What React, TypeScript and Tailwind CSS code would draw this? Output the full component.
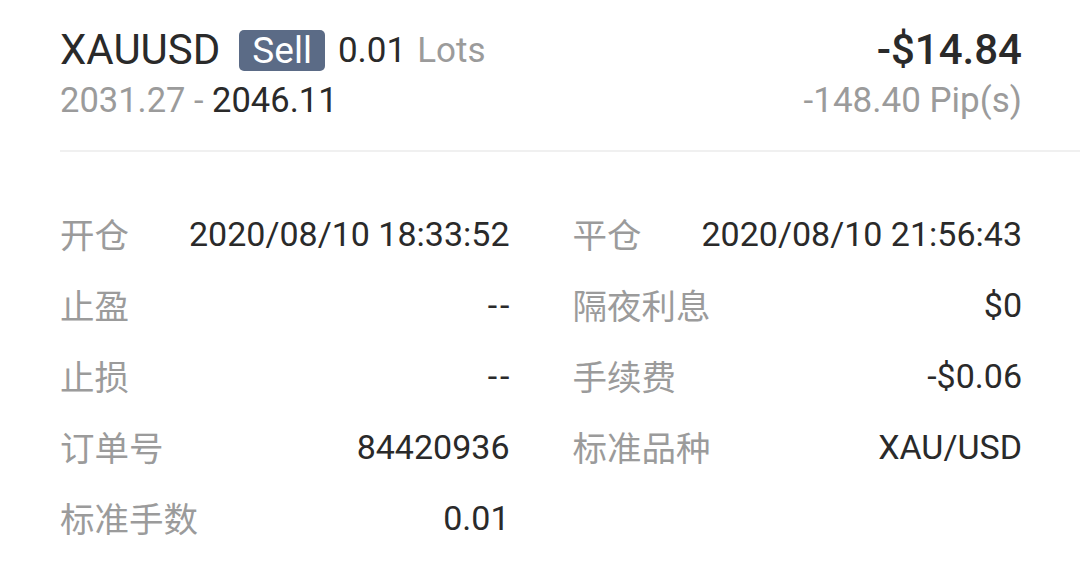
import React from "react";

const rows: [string, string, string, string][] = [
  ["开仓", "2020/08/10 18:33:52", "平仓", "2020/08/10 21:56:43"],
  ["止盈", "--", "隔夜利息", "$0"],
  ["止损", "--", "手续费", "-$0.06"],
  ["订单号", "84420936", "标准品种", "XAU/USD"],
  ["标准手数", "0.01", "", ""],
];

function Cell({ label, value }: { label: string; value: string }) {
  const dash = value === "--";
  return (
    <div className="flex h-[71px] items-center justify-between">
      <span className="text-[34.5px] leading-none text-[#9b9b9b] [font-family:'Noto_Sans_CJK_SC',sans-serif]">
        {label}
      </span>
      <span
        className={
          dash
            ? "mr-[-3px] text-[34px] leading-none tracking-[3px] text-[#2a2a2a]"
            : "text-[34px] leading-none text-[#2a2a2a]"
        }
      >
        {value}
      </span>
    </div>
  );
}

export default function App() {
  return (
    <div className="h-[580px] w-[1080px] overflow-hidden bg-white [font-family:Roboto,'Noto_Sans_CJK_SC',sans-serif]">
      <div className="flex justify-between pl-[60px] pr-[58px] pt-[25px]">
        <div className="flex flex-col">
          <div className="flex h-[50px] items-center">
            <span className="text-[42px] leading-none text-[#2a2a2a]">XAUUSD</span>
            <span className="ml-[19px] flex h-[41px] items-center rounded-[5px] bg-[#5b6b86] px-[13px] text-[37px] leading-none text-white">
              Sell
            </span>
            <span className="ml-[13px] text-[35px] leading-none text-[#2a2a2a]">0.01</span>
            <span className="ml-[11px] text-[35px] leading-none text-[#9b9b9b]">Lots</span>
          </div>
          <div className="flex h-[50px] items-center text-[34.5px] leading-none">
            <span className="text-[#9b9b9b]">2031.27 -&nbsp;</span>
            <span className="text-[#2a2a2a]">2046.11</span>
          </div>
        </div>
        <div className="flex flex-col items-end">
          <div className="flex h-[50px] items-center text-[42px] leading-none font-medium text-[#2a2a2a]">
            -$14.84
          </div>
          <div className="flex h-[50px] items-center text-[35px] leading-none text-[#9b9b9b]">
            -148.40 Pip(s)
          </div>
        </div>
      </div>
      <div className="ml-[60px] mt-[25px] h-[2px] bg-[#f0f0f0]" />
      <div className="grid grid-cols-2 gap-x-[63px] pl-[60px] pr-[58px] pt-[46px]">
        {rows.map((r, i) => (
          <React.Fragment key={i}>
            <Cell label={r[0]} value={r[1]} />
            {r[2] ? <Cell label={r[2]} value={r[3]} /> : <div />}
          </React.Fragment>
        ))}
      </div>
    </div>
  );
}
